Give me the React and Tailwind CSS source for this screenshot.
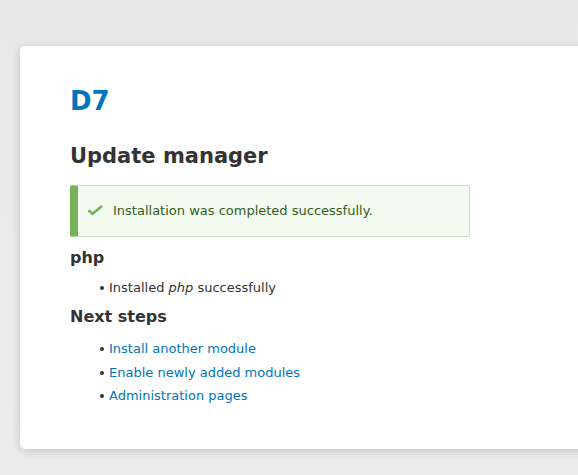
const Bullet = ({ children }) => (
  <li className="flex items-center">
    <span className="mr-[5px] ml-[30px] h-[4px] w-[4px] shrink-0 rounded-full bg-[#333]" />
    {children}
  </li>
);

export default function App() {
  return (
    <div className="min-h-screen overflow-hidden bg-[linear-gradient(to_bottom,#e8e8e8,#ececec)] pt-[46px] pl-[20px] font-['DejaVu_Sans',sans-serif] text-[#333]">
      <div className="w-[640px] h-[403px] rounded-l-[5px] bg-white pl-[50px] pt-[38px] shadow-[0_2px_8px_rgba(0,0,0,0.18)]">
        <h1 className="text-[26px] font-bold leading-[34px] text-[#0074bd]">D7</h1>
        <h2 className="mt-[23px] text-[21px] font-bold leading-[30px] text-[#333]">Update manager</h2>

        <div className="mt-[14px] flex w-[400px] h-[52px] items-center rounded-[2px] border border-l-[8px] border-[#c9e1bd] border-l-[#77b259] bg-[#f3faef] pl-[9px] text-[13px] text-[#325e1c]">
          <svg width="16" height="16" viewBox="0 0 16 16" className="mr-[10px] shrink-0">
            <path d="M1.5 7.2l4 3.6L15 3" fill="none" stroke="#77b259" strokeWidth="2.6" />
          </svg>
          <span>Installation was completed successfully.</span>
        </div>

        <h3 className="mt-[10px] text-[16px] font-bold leading-[22px]">php</h3>
        <ul className="mt-[9px] text-[13px] leading-[20px] text-[#333]">
          <Bullet><span>Installed <em>php</em> successfully</span></Bullet>
        </ul>

        <h3 className="mt-[8px] text-[16px] font-bold leading-[22px]">Next steps</h3>
        <ul className="mt-[11px] flex flex-col gap-[3.5px] text-[13px] leading-[20px] text-[#333]">
          <Bullet><a href="#" className="text-[#0074bd]">Install another module</a></Bullet>
          <Bullet><a href="#" className="text-[#0074bd]">Enable newly added modules</a></Bullet>
          <Bullet><a href="#" className="text-[#0074bd]">Administration pages</a></Bullet>
        </ul>
      </div>
    </div>
  );
}
